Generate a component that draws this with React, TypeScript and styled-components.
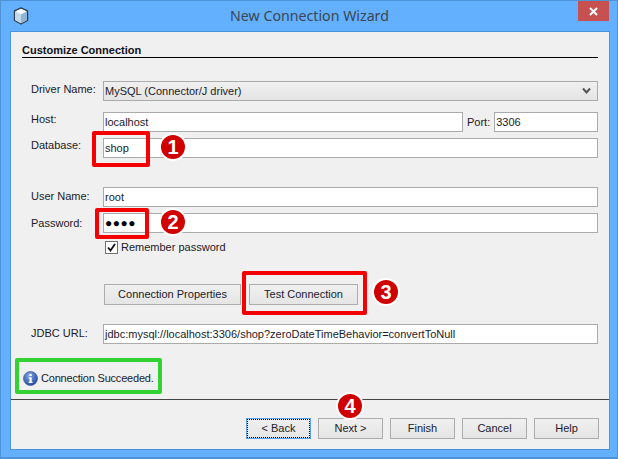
import { createGlobalStyle, styled } from "styled-components";

const GlobalStyle = createGlobalStyle`
  html, body {
    margin: 0;
    padding: 0;
    background: #fff;
  }
  body {
    font-family: "Liberation Sans", "Noto Sans", sans-serif;
    font-size: 11px;
    color: #1a1a2a;
  }
`;

const Wizard = styled.div`
  position: relative;
  width: 618px;
  height: 459px;
  box-sizing: border-box;
  border: 1px solid #4f93d6;
  border-bottom-width: 2px;
  background: #62b0ff;
  display: flex;
  flex-direction: column;
  overflow: hidden;
`;

const TitleBar = styled.div`
  height: 30px;
  flex-shrink: 0;
  display: flex;
  align-items: center;
  padding-left: 12px;
`;

const Title = styled.div`
  flex: 1;
  text-align: center;
  font-family: "Noto Sans", sans-serif;
  font-size: 14.2px;
  color: #3c4650;
  padding-left: 12px;
  padding-bottom: 2px;
`;

const CloseButton = styled.div`
  width: 31px;
  height: 20px;
  margin-right: 8px;
  margin-top: -10px;
  background: #c75050;
  display: flex;
  align-items: center;
  justify-content: center;
`;

const Content = styled.div`
  flex: 1;
  margin: 0 7px 7px 9px;
  border: 1px solid #4a94dc;
  background: #f0f0f0;
  display: flex;
  flex-direction: column;
`;

const Main = styled.div`
  height: 368px;
  box-sizing: border-box;
  padding: 10px 11px 0 11px;
  border-bottom: 1px solid #444;
`;

const Heading = styled.div`
  font-weight: 700;
  color: #101018;
  height: 15px;
  line-height: 17px;
  border-bottom: 1px solid #000;
  margin-bottom: 23px;
`;

const Row = styled.div<{ $gap?: number }>`
  display: flex;
  align-items: center;
  height: 20px;
  margin-bottom: ${(p) => p.$gap ?? 6}px;
  padding-left: 9px;
`;

const Label = styled.div<{ $lift?: number }>`
  width: 72px;
  flex-shrink: 0;
  padding-bottom: ${(p) => p.$lift ?? 2}px;
`;

const Field = styled.div<{ $width?: number }>`
  box-sizing: border-box;
  height: 20px;
  line-height: 18px;
  background: #fff;
  border: 1px solid #ababab;
  padding-left: 1px;
  ${(p) => (p.$width ? `width: ${p.$width}px;` : "flex: 1;")}
  white-space: nowrap;
  overflow: hidden;
`;

const Select = styled(Field)`
  background: linear-gradient(#f0f0f0, #e4e4e4);
  display: flex;
  align-items: center;
  justify-content: space-between;
  padding-right: 6px;
  line-height: normal;
`;

const PortLabel = styled.div`
  margin: 0 4px 0 4px;
`;

const Dots = styled.span`
  font-size: 12px;
  letter-spacing: 0.5px;
  color: #000;
`;

const CheckRow = styled.div`
  display: flex;
  align-items: center;
  gap: 3px;
  height: 16px;
  margin: 0 0 29px 83px;
`;

const CheckBox = styled.div`
  width: 13px;
  height: 13px;
  box-sizing: border-box;
  background: #fff;
  border: 1px solid #707070;
  display: flex;
  align-items: center;
  justify-content: center;
`;

const ButtonRow = styled.div`
  display: flex;
  gap: 8px;
  height: 21px;
  margin: 0 0 19px 82px;
`;

const Button = styled.div<{ $width: number; $focused?: boolean }>`
  position: relative;
  box-sizing: border-box;
  width: ${(p) => p.$width}px;
  height: 21px;
  padding-bottom: 2px;
  display: flex;
  align-items: center;
  justify-content: center;
  border: 1px solid ${(p) => (p.$focused ? "#5aa2e8" : "#acacac")};
  background: linear-gradient(#f0f0f0, #e5e5e5);
  ${(p) => p.$focused && "&::after { content: ''; position: absolute; inset: 0; border: 1px dotted #000; }"}
`;

const Status = styled.div`
  display: flex;
  align-items: center;
  gap: 3px;
  margin: 25px 0 0 1px;
  height: 18px;
  letter-spacing: -0.2px;
`;

const Footer = styled.div`
  flex: 1;
  display: flex;
  justify-content: flex-end;
  gap: 7px;
  padding: 18px 10px 0 0;
`;

const Mark = styled.div<{ $x: number; $y: number; $w: number; $h: number; $color?: string }>`
  position: absolute;
  left: ${(p) => p.$x}px;
  top: ${(p) => p.$y}px;
  width: ${(p) => p.$w}px;
  height: ${(p) => p.$h}px;
  box-sizing: border-box;
  border: 4px solid ${(p) => p.$color ?? "#f50000"};
  border-radius: 2px;
`;

const Badge = styled.div<{ $x: number; $y: number }>`
  position: absolute;
  left: ${(p) => p.$x}px;
  top: ${(p) => p.$y}px;
  width: 24px;
  height: 24px;
  box-sizing: border-box;
  border-radius: 50%;
  background: #d00000;
  box-shadow: 0 0 0 2px #fff;
  color: #fff;
  font-family: "Liberation Sans", sans-serif;
  font-weight: 700;
  font-size: 20px;
  display: flex;
  align-items: center;
  justify-content: center;
`;

const CubeIcon = () => (
  <svg width="16" height="18" viewBox="0 0 16 18">
    <path d="M8 1 L14.5 4 V13.5 L8 17 L1.5 13.5 V4 Z" fill="#dfe8f0" stroke="#2f3f52" strokeWidth="1.4" strokeLinejoin="round" />
    <path d="M8 7.5 L14 4.5 V13 L8 16 Z" fill="#8fb4d6" />
    <path d="M2 4.5 L8 7.5 V16 L2 13 Z" fill="#c4d8ea" />
    <path d="M2.5 4.2 L8 1.8 L13.5 4.2 L8 7 Z" fill="#f6fafd" />
  </svg>
);

const CloseIcon = () => (
  <svg width="9" height="9" viewBox="0 0 9 9">
    <path d="M1 1 L8 8 M8 1 L1 8" stroke="#fff" strokeWidth="2" />
  </svg>
);

const ChevronIcon = () => (
  <svg width="9" height="8" viewBox="0 0 9 8">
    <path d="M1 1.5 L4.5 5.5 L8 1.5" fill="none" stroke="#555" strokeWidth="2" />
  </svg>
);

const CheckIcon = () => (
  <svg width="11" height="11" viewBox="0 0 11 11">
    <path d="M2 5.5 L4.5 8.5 L9 2" fill="none" stroke="#111" strokeWidth="1.8" />
  </svg>
);

const InfoIcon = () => (
  <svg width="15" height="15" viewBox="0 0 15 15">
    <defs>
      <radialGradient id="info" cx="40%" cy="30%" r="75%">
        <stop offset="0%" stopColor="#7fa6e4" />
        <stop offset="100%" stopColor="#23479c" />
      </radialGradient>
    </defs>
    <circle cx="7.5" cy="7.5" r="7" fill="url(#info)" stroke="#2a4c96" strokeWidth="0.6" />
    <rect x="6.3" y="2.8" width="2.4" height="2.2" fill="#fff" />
    <path d="M5.6 6.2 H8.7 V10.8 H9.6 V12 H5.6 V10.8 H6.5 V7.4 H5.6 Z" fill="#fff" />
  </svg>
);

const footerButtons = ["< Back", "Next >", "Finish", "Cancel", "Help"];

export default function App() {
  return (
    <>
      <GlobalStyle />
      <Wizard>
        <TitleBar>
          <CubeIcon />
          <Title>New Connection Wizard</Title>
          <CloseButton>
            <CloseIcon />
          </CloseButton>
        </TitleBar>
        <Content>
          <Main>
            <Heading>Customize Connection</Heading>
            <Row $gap={11}>
              <Label $lift={4}>Driver Name:</Label>
              <Select>
                MySQL (Connector/J driver)
                <ChevronIcon />
              </Select>
            </Row>
            <Row>
              <Label $lift={6}>Host:</Label>
              <Field $width={360}>localhost</Field>
              <PortLabel>Port:</PortLabel>
              <Field>3306</Field>
            </Row>
            <Row $gap={29}>
              <Label $lift={6}>Database:</Label>
              <Field>shop</Field>
            </Row>
            <Row>
              <Label $lift={2}>User Name:</Label>
              <Field>root</Field>
            </Row>
            <Row $gap={6}>
              <Label $lift={0}>Password:</Label>
              <Field>
                <Dots>●●●●</Dots>
              </Field>
            </Row>
            <CheckRow>
              <CheckBox>
                <CheckIcon />
              </CheckBox>
              Remember password
            </CheckRow>
            <ButtonRow>
              <Button $width={137}>Connection Properties</Button>
              <Button $width={109}>Test Connection</Button>
            </ButtonRow>
            <Row $gap={0}>
              <Label $lift={2}>JDBC URL:</Label>
              <Field>jdbc:mysql://localhost:3306/shop?zeroDateTimeBehavior=convertToNull</Field>
            </Row>
            <Status>
              <InfoIcon />
              Connection Succeeded.
            </Status>
          </Main>
          <Footer>
            {footerButtons.map((label, i) => (
              <Button key={label} $width={65} $focused={i === 0}>
                {label}
              </Button>
            ))}
          </Footer>
        </Content>
        <Mark $x={91} $y={130} $w={58} $h={36} />
        <Mark $x={94} $y={207} $w={54} $h={31} />
        <Mark $x={241} $y={270} $w={125} $h={44} />
        <Mark $x={14} $y={357} $w={147} $h={36} $color="#32d232" />
        <Badge $x={160} $y={134}>1</Badge>
        <Badge $x={160} $y={209}>2</Badge>
        <Badge $x={373} $y={279}>3</Badge>
        <Badge $x={337} $y={393}>4</Badge>
      </Wizard>
    </>
  );
}
